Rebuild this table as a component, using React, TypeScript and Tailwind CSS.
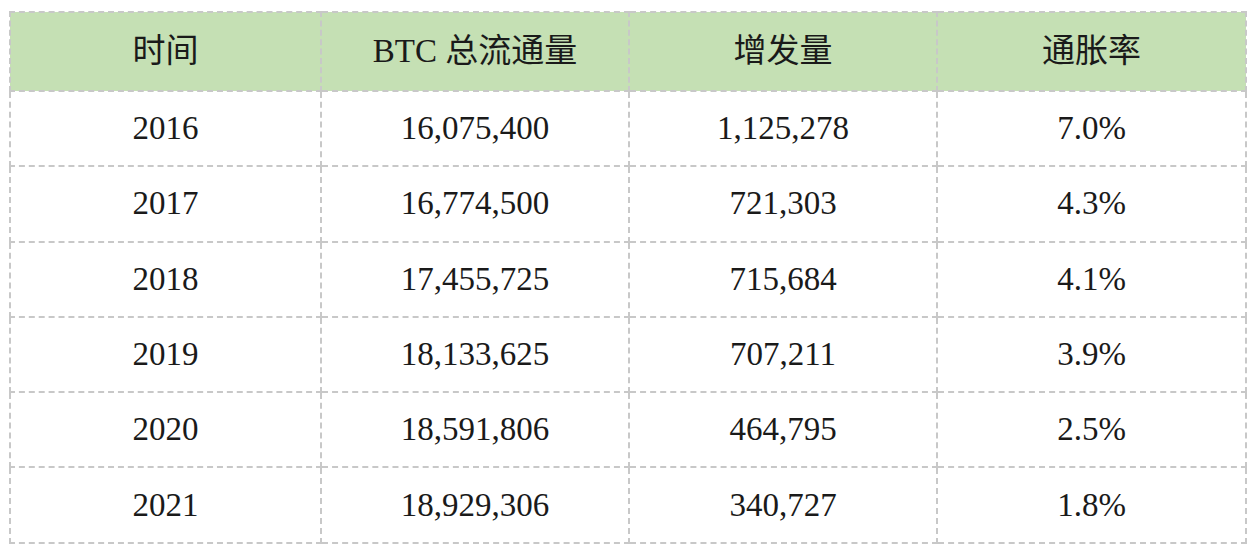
import React from 'react';

const HEADERS = ['时间', 'BTC 总流通量', '增发量', '通胀率'];

const ROWS: string[][] = [
  ['2016', '16,075,400', '1,125,278', '7.0%'],
  ['2017', '16,774,500', '721,303', '4.3%'],
  ['2018', '17,455,725', '715,684', '4.1%'],
  ['2019', '18,133,625', '707,211', '3.9%'],
  ['2020', '18,591,806', '464,795', '2.5%'],
  ['2021', '18,929,306', '340,727', '1.8%'],
];

const COL_WIDTHS = ['w-[311px]', 'w-[308px]', 'w-[308px]', 'w-[309px]'];

export default function App() {
  return (
    <div className="w-[1258px] h-[552px] bg-white pt-[11px] pl-[9px] font-['Liberation_Serif','Noto_Sans_CJK_SC',serif] text-[33px] text-[#1a1a1a]">
      <table className="w-[1236px] border-collapse table-fixed">
        <thead>
          <tr className="h-[79px] bg-[#c5e0b4]">
            {HEADERS.map((h, i) => (
              <th
                key={h}
                className={`${COL_WIDTHS[i]} border-2 border-dashed border-[#c8c8c8] font-normal text-center align-middle leading-none`}
              >
                {h}
              </th>
            ))}
          </tr>
        </thead>
        <tbody>
          {ROWS.map((row) => (
            <tr key={row[0]} className="h-[75.3px]">
              {row.map((cell, i) => (
                <td
                  key={i}
                  className="border-2 border-dashed border-[#c8c8c8] text-center align-middle leading-none"
                >
                  {cell}
                </td>
              ))}
            </tr>
          ))}
        </tbody>
      </table>
    </div>
  );
}
